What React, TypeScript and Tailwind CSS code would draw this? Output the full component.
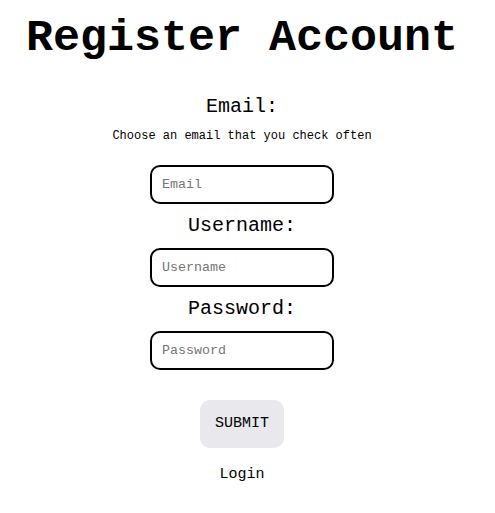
export default function App() {
  return (
    <div className="flex flex-col items-center bg-white text-black font-['Liberation_Mono',monospace] pr-[11px]">
      <h1 className="mt-[13px] text-[45px] font-bold leading-[51px]">Register Account</h1>

      <form className="flex flex-col items-center mt-[31px]">
        <label htmlFor="email" className="text-[20px] leading-[23px]">Email:</label>
        <p className="mt-[11px] text-[12px] leading-[14px]">Choose an email that you check often</p>
        <input
          id="email"
          type="email"
          placeholder="Email"
          className="mt-[22px] w-[184px] h-[39px] border-2 border-black rounded-[10px] px-[10px] text-[13.33px] placeholder:text-[#757575] outline-none"
        />

        <label htmlFor="username" className="mt-[10px] text-[20px] leading-[23px]">Username:</label>
        <input
          id="username"
          type="text"
          placeholder="Username"
          className="mt-[11px] w-[184px] h-[39px] border-2 border-black rounded-[10px] px-[10px] text-[13.33px] placeholder:text-[#757575] outline-none"
        />

        <label htmlFor="password" className="mt-[10px] text-[20px] leading-[23px]">Password:</label>
        <input
          id="password"
          type="password"
          placeholder="Password"
          className="mt-[11px] w-[184px] h-[39px] border-2 border-black rounded-[10px] px-[10px] text-[13.33px] placeholder:text-[#757575] outline-none"
        />

        <button
          type="button"
          className="mt-[30px] w-[84px] h-[48px] pt-[1px] rounded-[10px] bg-[#e8e8ed] text-[15px]"
        >
          SUBMIT
        </button>
      </form>

      <a className="mt-[18px] text-[15px] leading-[17px] cursor-pointer">Login</a>
    </div>
  );
}
